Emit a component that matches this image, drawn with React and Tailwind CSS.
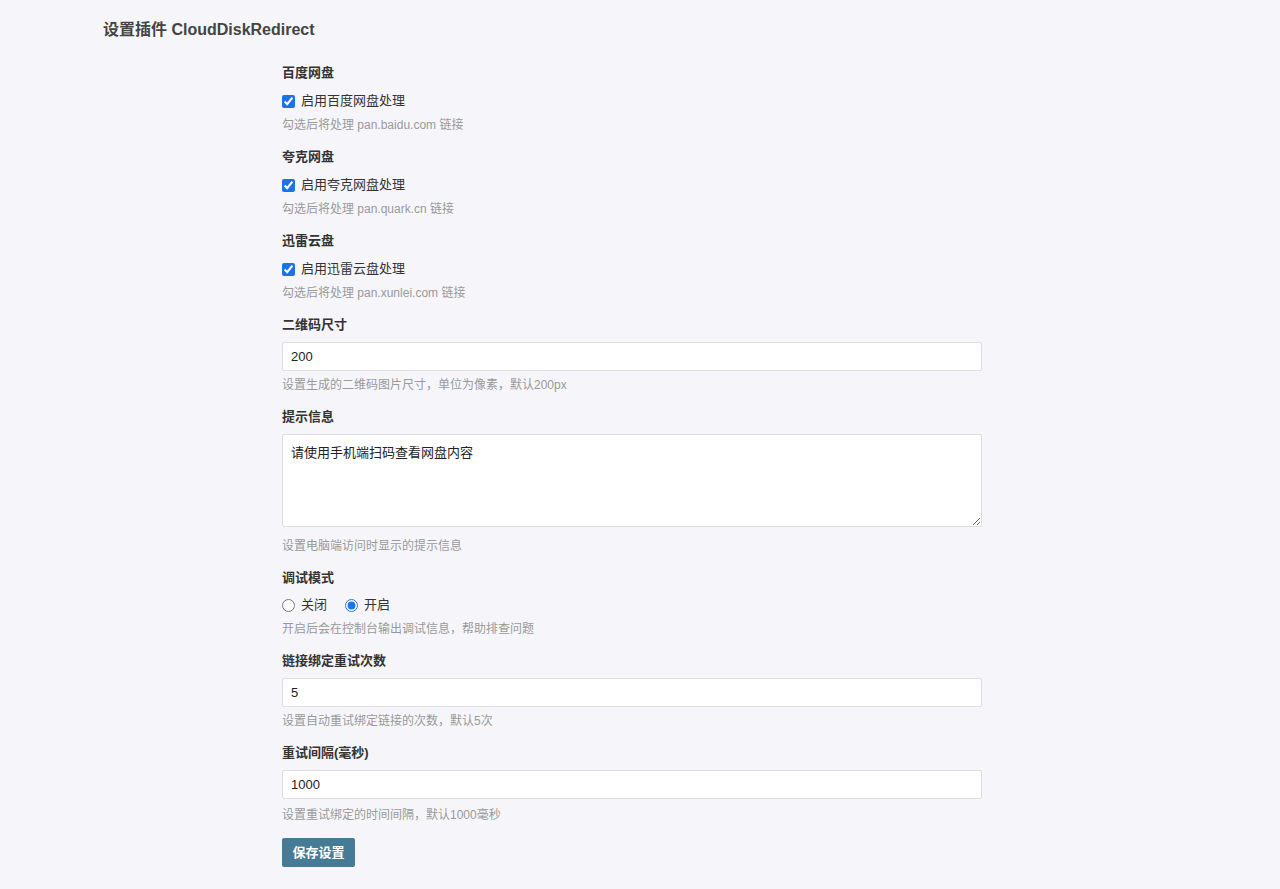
import React from "react";

const font = { fontFamily: '"Liberation Sans", "Noto Sans CJK SC", sans-serif' };

function Label({ children }) {
  return <div className="h-5 leading-5 text-[13px] font-bold text-[#333]">{children}</div>;
}
function Desc({ children, className = "" }) {
  return <div className={"h-5 leading-5 text-[12px] text-[#999] " + className}>{children}</div>;
}
function CheckSection({ title, text, desc }) {
  return (
    <div className="mb-3">
      <Label>{title}</Label>
      <label className="mt-2 h-5 flex items-center gap-[6px] text-[13px] text-[#333]">
        <input type="checkbox" defaultChecked className="m-0 w-[13px] h-[13px] accent-[#1a73e8]" />
        <span>{text}</span>
      </label>
      <Desc className="mt-1">{desc}</Desc>
    </div>
  );
}
function InputSection({ title, value, desc, descMt = "mt-1" }) {
  return (
    <div className="mb-3">
      <Label>{title}</Label>
      <input
        type="text"
        defaultValue={value}
        className="mt-[7px] block w-[700px] h-[29px] px-2 bg-white border border-[#dcdce4] rounded-[2px] text-[13px] text-[#222] outline-none"
        style={font}
      />
      <Desc className={descMt}>{desc}</Desc>
    </div>
  );
}

export default function App() {
  return (
    <div className="min-h-[889px] bg-[#f6f6fa] text-[#333]" style={font}>
      <div className="pl-[103px] pt-[18px]">
        <div className="h-6 leading-6 text-[16px] font-bold text-[#444]">设置插件 CloudDiskRedirect</div>
      </div>
      <div className="ml-[282px] mt-[21px] w-[700px]">
        <CheckSection title="百度网盘" text="启用百度网盘处理" desc="勾选后将处理 pan.baidu.com 链接" />
        <CheckSection title="夸克网盘" text="启用夸克网盘处理" desc="勾选后将处理 pan.quark.cn 链接" />
        <CheckSection title="迅雷云盘" text="启用迅雷云盘处理" desc="勾选后将处理 pan.xunlei.com 链接" />
        <InputSection title="二维码尺寸" value="200" desc="设置生成的二维码图片尺寸，单位为像素，默认200px" />
        <div className="mb-3">
          <Label>提示信息</Label>
          <textarea
            defaultValue="请使用手机端扫码查看网盘内容"
            className="mt-[7px] block w-[700px] h-[93px] px-2 py-[8px] bg-white border border-[#dcdce4] rounded-[2px] text-[13px] text-[#222] outline-none resize-y"
            style={font}
          />
          <Desc className="mt-[9px]">设置电脑端访问时显示的提示信息</Desc>
        </div>
        <div className="mb-3">
          <Label>调试模式</Label>
          <div className="mt-[7px] h-5 flex items-center text-[13px] text-[#333]">
            <label className="flex items-center gap-[6px]">
              <input type="radio" name="debug" className="m-0 w-[13px] h-[13px] accent-[#1a73e8]" />
              <span>关闭</span>
            </label>
            <label className="flex items-center gap-[6px] ml-[18px]">
              <input type="radio" name="debug" defaultChecked className="m-0 w-[13px] h-[13px] accent-[#1a73e8]" />
              <span>开启</span>
            </label>
          </div>
          <Desc className="mt-1">开启后会在控制台输出调试信息，帮助排查问题</Desc>
        </div>
        <InputSection title="链接绑定重试次数" value="5" desc="设置自动重试绑定链接的次数，默认5次" />
        <InputSection title="重试间隔(毫秒)" value="1000" desc="设置重试绑定的时间间隔，默认1000毫秒" descMt="mt-[6px]" />
        <button
          className="mt-[1px] h-[29px] w-[73px] bg-[#467b96] text-white text-[13px] font-bold rounded-[2px]"
          style={font}
        >
          保存设置
        </button>
      </div>
    </div>
  );
}
